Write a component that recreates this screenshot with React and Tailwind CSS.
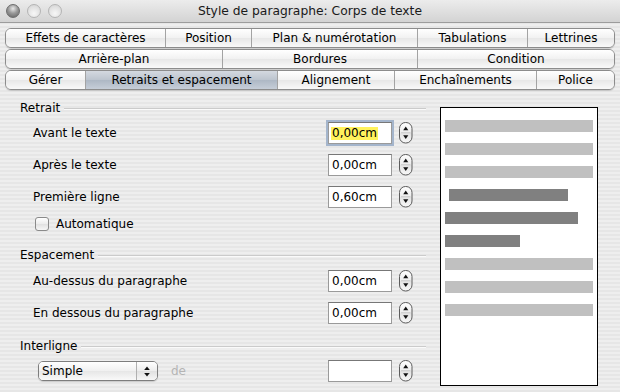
import React from 'react';

const font = { fontFamily: '"DejaVu Sans", "Liberation Sans", sans-serif' };

const tabRows = [
  [
    { label: 'Effets de caractères', w: 'w-[159px]' },
    { label: 'Position', w: 'w-[86px]' },
    { label: 'Plan & numérotation', w: 'w-[166px]' },
    { label: 'Tabulations', w: 'w-[110px]' },
    { label: 'Lettrines', w: 'flex-1' },
  ],
  [
    { label: 'Arrière-plan', w: 'w-[216px]' },
    { label: 'Bordures', w: 'w-[195px]' },
    { label: 'Condition', w: 'flex-1' },
  ],
  [
    { label: 'Gérer', w: 'w-[79px]' },
    { label: 'Retraits et espacement', w: 'w-[192px]', active: true },
    { label: 'Alignement', w: 'w-[117px]' },
    { label: 'Enchaînements', w: 'w-[142px]' },
    { label: 'Police', w: 'flex-1' },
  ],
];

// preview bars: light = surrounding paragraphs, dark = current one
const bars = [
  { w: 148, ml: 0, dark: false },
  { w: 148, ml: 0, dark: false },
  { w: 148, ml: 0, dark: false },
  { w: 119, ml: 4, dark: true },
  { w: 133, ml: 0, dark: true },
  { w: 75, ml: 0, dark: true },
  { w: 148, ml: 0, dark: false },
  { w: 148, ml: 0, dark: false },
  { w: 148, ml: 0, dark: false },
];

function Stepper() {
  return (
    <svg width="14" height="22" viewBox="0 0 14 22" className="flex-none">
      <defs>
        <linearGradient id="stp" x1="0" y1="0" x2="0" y2="1">
          <stop offset="0" stopColor="#ffffff" />
          <stop offset="0.5" stopColor="#ececec" />
          <stop offset="0.5" stopColor="#e2e2e2" />
          <stop offset="1" stopColor="#f8f8f8" />
        </linearGradient>
      </defs>
      <rect x="0.5" y="0.5" width="12.5" height="20.5" rx="6" fill="url(#stp)" stroke="#5c5c5c" />
      <line x1="2" y1="10.75" x2="11.5" y2="10.75" stroke="#c8c8c8" />
      <polygon points="4.2,8.2 9.3,8.2 6.75,4.6" fill="#111" />
      <polygon points="4.2,13.3 9.3,13.3 6.75,16.9" fill="#111" />
    </svg>
  );
}

function Field({ value, focused }) {
  return (
    <div
      className={`flex h-[22px] w-[64px] flex-none items-center border border-[#9a9a9a] border-t-[#777] bg-white pl-[2px] text-[12px] text-black ${
        focused ? 'shadow-[0_0_0_2px_#a4b5cc]' : ''
      }`}
    >
      {value && (
        <span className={focused ? 'bg-[#fff25c] px-[1px] leading-[13px]' : 'px-[1px]'}>{value}</span>
      )}
    </div>
  );
}

function Section({ title }) {
  return (
    <div className="flex h-[16px] items-center gap-[4px] pr-0">
      <span className="text-[12px] leading-[16px]">{title}</span>
      <div className="h-px flex-1 bg-[#cbcbcb] shadow-[0_1px_0_#fafafa]" />
    </div>
  );
}

function Row({ label, value, focused }) {
  return (
    <div className="flex h-[22px] items-center pl-[13px] pr-[13px]">
      <span className="flex-1 text-[12px]">{label}</span>
      <Field value={value} focused={focused} />
      <div className="w-[7px]" />
      <Stepper />
    </div>
  );
}

function Light({ cls }) {
  return <div className={`h-[14px] w-[14px] rounded-full ${cls}`} />;
}

export default function App() {
  return (
    <div
      style={font}
      className="flex h-[392px] w-[620px] flex-col overflow-hidden bg-[image:repeating-linear-gradient(180deg,#eeeeee_0px,#eeeeee_2px,#e6e6e6_2px,#e6e6e6_4px)] text-black"
    >
      {/* title bar */}
      <div className="relative flex h-[23px] flex-none items-center border-b border-[#9c9c9c] bg-[linear-gradient(#ececec,#d3d3d3)] pl-[6px]">
        <div className="flex gap-[7px]">
          <Light cls="border border-[#6d6d6d] bg-[radial-gradient(circle_at_50%_30%,#e8e8e8_0%,#9a9a9a_45%,#5f5f5f_100%)]" />
          <Light cls="border border-[#b4b4b4] bg-[radial-gradient(circle_at_50%_70%,#f7f7f7_0%,#e1e1e1_60%,#cfcfcf_100%)]" />
          <Light cls="border border-[#b4b4b4] bg-[radial-gradient(circle_at_50%_70%,#f7f7f7_0%,#e1e1e1_60%,#cfcfcf_100%)]" />
        </div>
        <div className="absolute inset-0 flex items-center justify-center text-[12.3px] text-[#1a1a1a]">
          Style de paragraphe: Corps de texte
        </div>
      </div>

      {/* tab rows */}
      <div className="mt-[5px] flex flex-none flex-col gap-[1px] px-[5px]">
        {tabRows.map((row, i) => (
          <div
            key={i}
            className="flex h-[20px] overflow-hidden rounded-[6px] border border-[#8c8c8c] shadow-[0_1px_1px_rgba(0,0,0,0.15)]"
          >
            {row.map((t, j) => (
              <div
                key={t.label}
                className={`${t.w} flex items-center justify-center text-[12px] leading-none ${
                  j > 0 ? 'border-l border-[#a3a3a3]' : ''
                } ${
                  t.active
                    ? 'bg-[linear-gradient(#d4d9e0,#bcc4ce_50%,#adb7c4_50%,#c6ced8)]'
                    : 'bg-[linear-gradient(#ffffff,#f1f1f1_50%,#e7e7e7_50%,#f9f9f9)]'
                }`}
              >
                {t.label}
              </div>
            ))}
          </div>
        ))}
      </div>

      {/* panel */}
      <div className="flex flex-1 pl-[20px]">
        <div className="flex w-[406px] flex-col pt-[10px]">
          <Section title="Retrait" />
          <div className="mt-[6px] flex flex-col gap-[10px]">
            <Row label="Avant le texte" value="0,00cm" focused />
            <Row label="Après le texte" value="0,00cm" />
            <Row label="Première ligne" value="0,60cm" />
          </div>
          <div className="mt-[8px] flex h-[16px] items-center gap-[7px] pl-[15px]">
            <div className="h-[14px] w-[14px] rounded-[3px] border border-[#8a8a8a] bg-[linear-gradient(#ffffff,#ececec_50%,#e0e0e0_50%,#f6f6f6)]" />
            <span className="text-[12px]">Automatique</span>
          </div>

          <div className="mt-[15px]">
            <Section title="Espacement" />
          </div>
          <div className="mt-[7px] flex flex-col gap-[10px]">
            <Row label="Au-dessus du paragraphe" value="0,00cm" />
            <Row label="En dessous du paragraphe" value="0,00cm" />
          </div>

          <div className="mt-[14px]">
            <Section title="Interligne" />
          </div>
          <div className="mt-[6px] flex h-[22px] items-center pl-[18px] pr-[13px]">
            <div className="flex h-[20px] w-[120px] flex-none overflow-hidden rounded-[5px] border border-[#7d7d7d] shadow-[0_1px_1px_rgba(0,0,0,0.15)]">
              <div className="flex flex-1 items-center bg-[linear-gradient(#ffffff,#f0f0f0_50%,#e6e6e6_50%,#f9f9f9)] pl-[3px] text-[12px]">
                Simple
              </div>
              <div className="flex w-[21px] items-center justify-center border-l border-[#b0b0b0] bg-[linear-gradient(#ffffff,#ececec_50%,#e0e0e0_50%,#f6f6f6)]">
                <svg width="8" height="13" viewBox="0 0 8 13">
                  <polygon points="1.2,5 6.8,5 4,1.4" fill="#111" />
                  <polygon points="1.2,8 6.8,8 4,11.6" fill="#111" />
                </svg>
              </div>
            </div>
            <span className="ml-[13px] flex-1 text-[12px] text-[#b4b4b4]">de</span>
            <Field value="" />
            <div className="w-[7px]" />
            <Stepper />
          </div>
        </div>

        {/* preview */}
        <div className="ml-[14px] mt-[17px] flex h-[279px] w-[158px] flex-col gap-[11px] border border-black bg-white pl-[4px] pt-[12px]">
          {bars.map((b, i) => (
            <div
              key={i}
              className={`h-[12px] flex-none ${b.dark ? 'bg-[#808080]' : 'bg-[#c0c0c0]'}`}
              style={{ width: b.w, marginLeft: b.ml }}
            />
          ))}
        </div>
      </div>
    </div>
  );
}
